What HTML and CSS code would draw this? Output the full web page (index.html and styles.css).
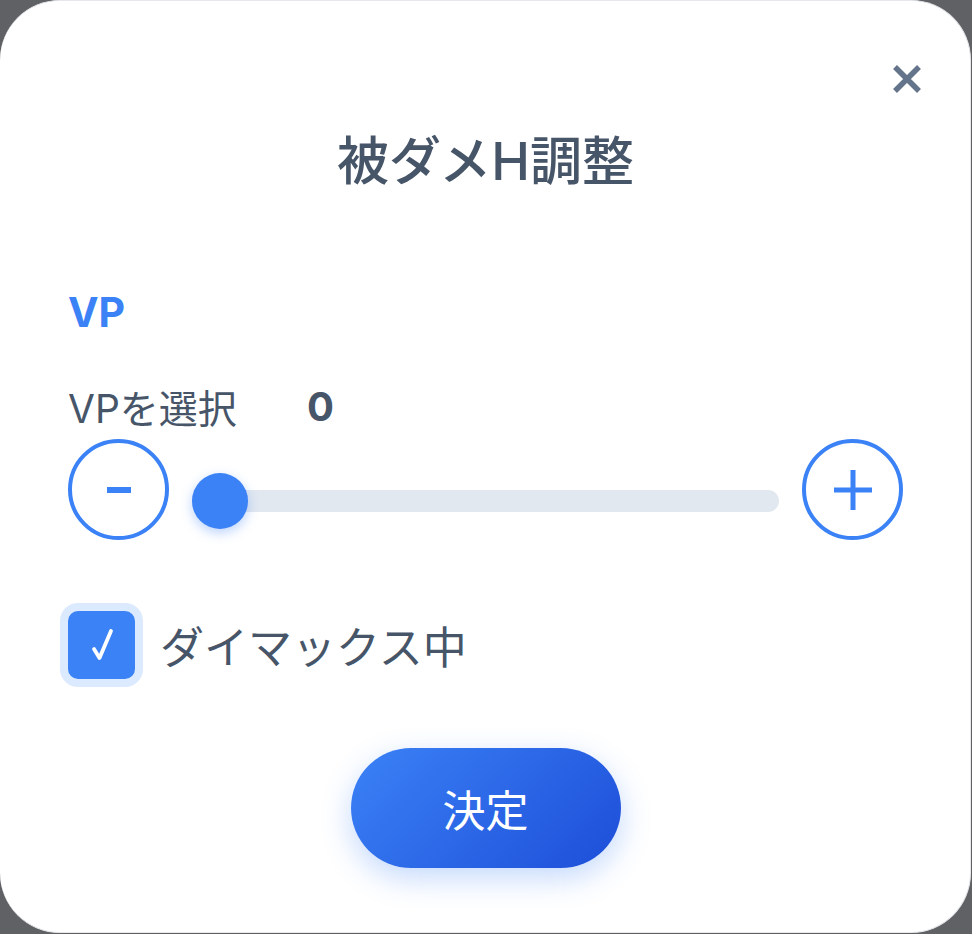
FILE: index.html
```html
<!DOCTYPE html>
<html lang="ja">
<head>
<meta charset="utf-8">
<link rel="stylesheet" href="styles.css">
</head>
<body>
<div class="modal">
  <button class="close" aria-label="close">
    <svg width="30" height="30" viewBox="0 0 30 30"><path d="M3 3 L27 27 M27 3 L3 27" stroke="#64748b" stroke-width="5.5" stroke-linecap="butt" fill="none"/></svg>
  </button>
  <h1 class="title">被ダメH調整</h1>
  <div class="section-label">VP</div>
  <div class="value-row">
    <span class="value-label">VPを選択</span>
    <span class="value">0</span>
  </div>
  <div class="slider-row">
    <div class="round-btn">
      <svg width="24" height="6" viewBox="0 0 24 6"><rect x="0" y="0" width="24" height="6" fill="#3b82f6"/></svg>
    </div>
    <div class="slider">
      <div class="track"></div>
      <div class="thumb"></div>
    </div>
    <div class="round-btn">
      <svg width="38" height="40" viewBox="0 0 38 40"><rect x="0" y="17.5" width="38" height="5" fill="#3b82f6"/><rect x="16.5" y="0" width="5" height="40" fill="#3b82f6"/></svg>
    </div>
  </div>
  <div class="check-row">
    <div class="checkbox">
      <svg width="24" height="36" viewBox="0 0 24 36"><path d="M4 22 L9.5 31 L21 4" stroke="#fff" stroke-width="3.8" stroke-linecap="round" stroke-linejoin="round" fill="none"/></svg>
    </div>
    <span class="check-label">ダイマックス中</span>
  </div>
  <div class="actions">
    <button class="submit">決定</button>
  </div>
</div>
</body>
</html>
```

FILE: styles.css
```css
html, body {
  margin: 0;
  padding: 0;
}
body {
  background: #606164;
  width: 972px;
  height: 934px;
  overflow: hidden;
  font-family: Inter, "Noto Sans CJK JP", sans-serif;
}
.modal {
  position: relative;
  box-sizing: border-box;
  width: 971px;
  height: 933px;
  background: #fff;
  border: 1px solid #e5e7eb;
  border-left: none;
  border-radius: 60px;
  padding: 0 67px 0 68px;
  display: flex;
  flex-direction: column;
}
.close {
  position: absolute;
  top: 63px;
  right: 48px;
  width: 30px;
  height: 30px;
  padding: 0;
  border: none;
  background: none;
  display: flex;
}
.title {
  margin: 129px 0 0;
  text-align: center;
  font-size: 52px;
  line-height: 64px;
  font-weight: 500;
  color: #475569;
}
.section-label {
  margin-top: 94px;
  font-size: 41px;
  line-height: 48px;
  font-weight: 700;
  color: #3b82f6;
}
.value-row {
  margin-top: 46px;
  height: 48px;
  display: flex;
  align-items: center;
  color: #475569;
}
.value-label {
  font-size: 39px;
  width: 239px;
}
.value {
  font-size: 40px;
  font-weight: 700;
}
.slider-row {
  margin-top: 9px;
  display: flex;
  align-items: flex-start;
  gap: 23px;
}
.round-btn {
  box-sizing: border-box;
  width: 101px;
  height: 101px;
  border: 4px solid #3b82f6;
  border-radius: 50%;
  display: flex;
  align-items: center;
  justify-content: center;
  flex: none;
}
.slider {
  position: relative;
  flex: 1;
  height: 56px;
  margin-top: 34px;
  display: flex;
  align-items: center;
}
.track {
  width: 100%;
  height: 22px;
  border-radius: 11px;
  background: #e2e8f0;
}
.thumb {
  position: absolute;
  left: 0;
  top: 0;
  width: 56px;
  height: 56px;
  border-radius: 50%;
  background: #3b82f6;
  box-shadow: 0 4px 12px rgba(59, 130, 246, 0.35);
}
.check-row {
  margin-top: 71px;
  display: flex;
  align-items: center;
  gap: 24px;
}
.checkbox {
  width: 67px;
  height: 68px;
  border-radius: 10px;
  background: #3b82f6;
  box-shadow: 0 0 0 8px #dbeafe;
  display: flex;
  align-items: center;
  justify-content: center;
}
.check-label {
  font-size: 44px;
  color: #475569;
  margin-left: 1px;
}
.actions {
  margin-top: 69px;
  display: flex;
  justify-content: center;
}
.submit {
  width: 270px;
  height: 120px;
  border: none;
  border-radius: 60px;
  background: linear-gradient(135deg, #3b82f6 0%, #1d4ed8 100%);
  color: #fff;
  font-family: Inter, "Noto Sans CJK JP", sans-serif;
  font-size: 43px;
  font-weight: 400;
  box-shadow: 0 10px 30px rgba(59, 130, 246, 0.3);
}
```
